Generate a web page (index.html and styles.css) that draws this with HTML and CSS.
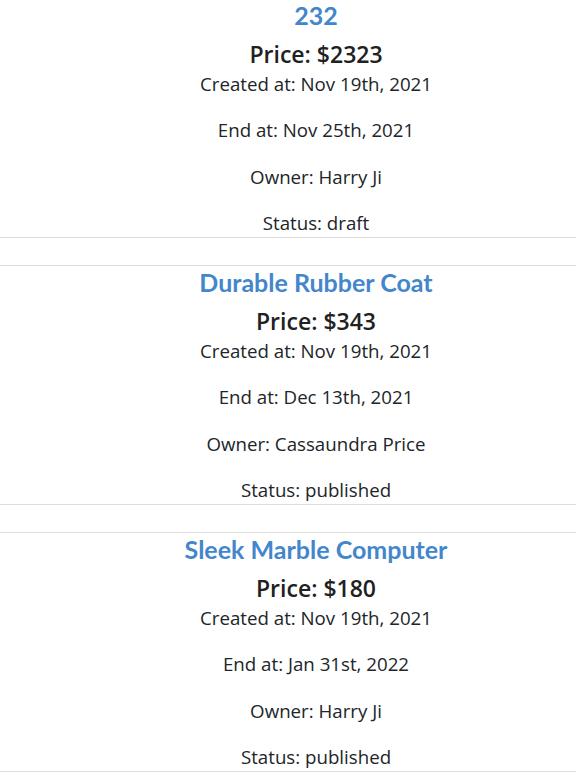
FILE: index.html
```html
<!DOCTYPE html>
<html>
<head>
<meta charset="utf-8">
<link rel="stylesheet" href="styles.css">
</head>
<body>
<div class="list">
  <div class="card">
    <h2 class="title">232</h2>
    <h3 class="price">Price: $2323</h3>
    <div class="info">
      <p>Created at: Nov 19th, 2021</p>
      <p>End at: Nov 25th, 2021</p>
      <p>Owner: Harry Ji</p>
      <p>Status: draft</p>
    </div>
  </div>
  <div class="card">
    <h2 class="title">Durable Rubber Coat</h2>
    <h3 class="price">Price: $343</h3>
    <div class="info">
      <p>Created at: Nov 19th, 2021</p>
      <p>End at: Dec 13th, 2021</p>
      <p>Owner: Cassaundra Price</p>
      <p>Status: published</p>
    </div>
  </div>
  <div class="card">
    <h2 class="title">Sleek Marble Computer</h2>
    <h3 class="price">Price: $180</h3>
    <div class="info">
      <p>Created at: Nov 19th, 2021</p>
      <p>End at: Jan 31st, 2022</p>
      <p>Owner: Harry Ji</p>
      <p>Status: published</p>
    </div>
  </div>
</div>
</body>
</html>
```
FILE: styles.css
```css
html, body {
  margin: 0;
  padding: 0;
  background: #fff;
}
body {
  font-family: "Open Sans", "Noto Sans", sans-serif;
  color: #212529;
  overflow: hidden;
}
.list {
  margin-top: -2px;
  display: flex;
  flex-direction: column;
  gap: 27px;
}
.card {
  border-top: 1px solid #dedede;
  border-bottom: 1px solid #dedede;
  text-align: center;
  display: flex;
  flex-direction: column;
  height: 238px;
  padding-left: 56px;
  white-space: nowrap;
}
.title {
  margin: 0;
  font-family: Lato, sans-serif;
  font-weight: 700;
  font-size: 25px;
  line-height: 32px;
  color: #4386cc;
}
.price {
  margin: 9px 0 0;
  font-size: 23px;
  font-weight: 600;
  line-height: 28px;
  color: #212121;
}
.info {
  margin-top: 2px;
  display: flex;
  flex-direction: column;
  gap: 18.33px;
}
.info p {
  margin: 0;
  font-size: 18.7px;
  line-height: 28px;
}
```
